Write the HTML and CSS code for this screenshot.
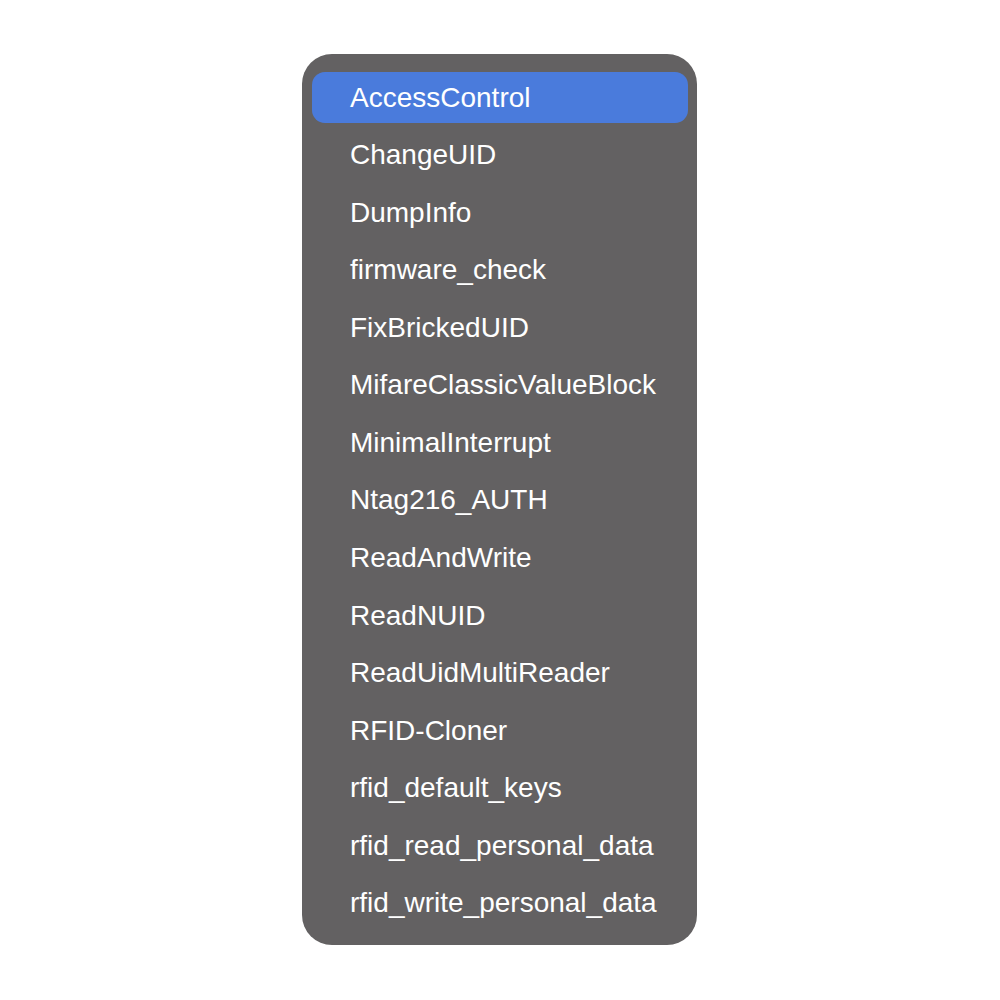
FILE: index.html
```html
<!DOCTYPE html>
<html>
<head>
<meta charset="utf-8">
<link rel="stylesheet" href="styles.css">
</head>
<body>
<div class="page">
  <ul class="menu">
    <li class="item selected">AccessControl</li>
    <li class="item">ChangeUID</li>
    <li class="item">DumpInfo</li>
    <li class="item">firmware_check</li>
    <li class="item">FixBrickedUID</li>
    <li class="item">MifareClassicValueBlock</li>
    <li class="item">MinimalInterrupt</li>
    <li class="item">Ntag216_AUTH</li>
    <li class="item">ReadAndWrite</li>
    <li class="item">ReadNUID</li>
    <li class="item">ReadUidMultiReader</li>
    <li class="item">RFID-Cloner</li>
    <li class="item">rfid_default_keys</li>
    <li class="item">rfid_read_personal_data</li>
    <li class="item">rfid_write_personal_data</li>
  </ul>
</div>
</body>
</html>
```

FILE: styles.css
```css
html, body {
  margin: 0;
  padding: 0;
  background: #ffffff;
}
.page {
  width: 1000px;
  height: 1000px;
  display: flex;
  justify-content: center;
  padding-top: 54px;
  box-sizing: border-box;
}
.menu {
  list-style: none;
  margin: 0 0 0 -1px;
  width: 395px;
  height: 891px;
  box-sizing: border-box;
  padding: 18px 9px 16px 10px;
  background: #636162;
  border-radius: 30px;
  display: flex;
  flex-direction: column;
  gap: 6.57px;
  font-family: "Liberation Sans", Arial, Helvetica, sans-serif;
  font-size: 28px;
  color: #ffffff;
}
.item {
  height: 51px;
  flex: 0 0 51px;
  display: flex;
  align-items: center;
  padding-left: 38px;
  border-radius: 13px;
  white-space: nowrap;
}
.item.selected {
  background: #4a7bdc;
}
```
